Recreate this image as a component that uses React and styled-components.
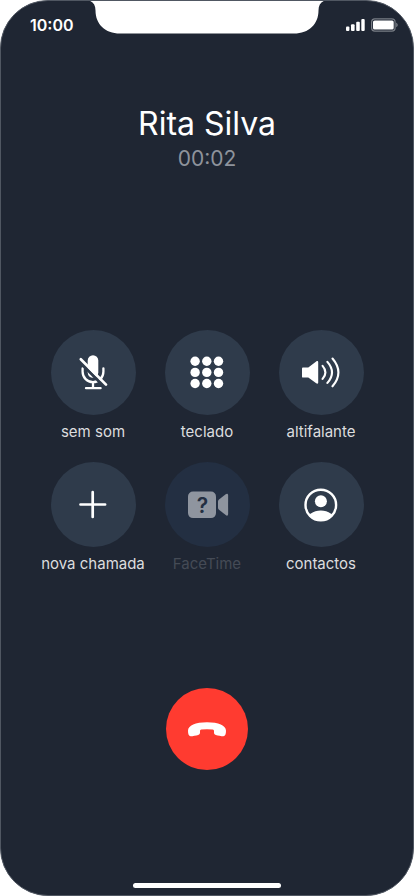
import React, { useState } from 'react'
import styled, { createGlobalStyle } from 'styled-components'

const GlobalStyle = createGlobalStyle`
    * {
        box-sizing: border-box;
    }
    body {
        margin: 0;
        background-color: #fff;
        font-family: Inter, "Liberation Sans", sans-serif;
    }
`
const Screen = styled.div`
    position: relative;
    display: flex;
    flex-direction: column;
    align-items: center;
    min-height: 100vh;
    overflow: hidden;
    border: 1px solid #505762;
    border-radius: 48px;
    background-color: #1f2633;
    color: #fff;
`
const Notch = styled.svg`
    position: absolute;
    top: -1px;
    left: 50%;
    transform: translateX(-50%);
`
const StatusBar = styled.header`
    display: flex;
    justify-content: space-between;
    align-items: center;
    width: 100%;
    height: 48px;
    padding: 0 15px 0 29px;
`
const Clock = styled.time`
    font-size: 16px;
    font-weight: 600;
`
const StatusIcons = styled.div`
    display: flex;
    align-items: center;
    gap: 6px;
`
const Caller = styled.div`
    display: flex;
    flex-direction: column;
    align-items: center;
    padding-top: 54px;
`
const CallerName = styled.h1`
    margin: 0;
    font-size: 32px;
    font-weight: 400;
    line-height: 42px;
`
const Duration = styled.div`
    font-size: 21px;
    line-height: 28px;
    color: #8e939c;
`
const ActionGrid = styled.div`
    display: grid;
    grid-template-columns: repeat(3, 1fr);
    row-gap: 19px;
    width: 100%;
    max-width: 342px;
    margin: auto 0;
    padding-top: 44px;
`
const ActionButton = styled.button`
    display: flex;
    flex-direction: column;
    align-items: center;
    gap: 5px;
    padding: 0;
    border: none;
    background: none;
    color: #dcdddf;
    font-family: inherit;
    font-size: 15px;
    line-height: 23px;
    white-space: nowrap;

    &:disabled {
        color: #454b56;
    }
`
const Circle = styled.span`
    display: flex;
    align-items: center;
    justify-content: center;
    width: 85px;
    height: 85px;
    border-radius: 50%;
    background-color: ${(props) => (props.$dimmed ? '#232f42' : '#2f3b4b')};
    color: ${(props) => (props.$dimmed ? '#8f959f' : '#fff')};
`
const HangUpButton = styled.button`
    display: flex;
    align-items: center;
    justify-content: center;
    width: 82px;
    height: 82px;
    padding: 0;
    border: none;
    border-radius: 50%;
    background-color: #ff3b30;
    color: #fff;
`
const HomeIndicator = styled.div`
    width: 148px;
    height: 5px;
    margin: 113px 0 7px;
    border-radius: 3px;
    background-color: #fff;
`

const Icon = ({ children }) => (
    <svg width="48" height="48" viewBox="0 0 48 48" fill="none" aria-hidden="true">
        {children}
    </svg>
)

const MicOffIcon = () => (
    <Icon>
        <rect x="18.7" y="6.2" width="10.6" height="22.6" rx="5.3" fill="currentColor" />
        <path d="M13.6 19.5v3.3a10.4 10.4 0 0 0 20.8 0v-3.3M24 33.2v6M17 39.2h14.6" stroke="currentColor" strokeWidth="2.3" strokeLinecap="round" />
        <path d="M9.8 12l25.4 25.6" stroke="#2f3b4b" strokeWidth="3" />
        <path d="M11.8 10.2l25.2 25.4" stroke="currentColor" strokeWidth="2.7" strokeLinecap="round" />
    </Icon>
)

const KeypadIcon = () => (
    <Icon>
        {[12.3, 23.4, 34.5].map((y) =>
            [12.1, 23.8, 35.5].map((x) => (
                <circle key={`${x}-${y}`} cx={x} cy={y} r="4.7" fill="currentColor" />
            ))
        )}
    </Icon>
)

const SpeakerIcon = () => (
    <Icon>
        <path d="M6.2 18.5h5.1l7.9-6c1-.7 2-.5 2 .8v20.2c0 1.3-1 1.5-2 .8l-7.9-5.7H6.2c-.8 0-1.2-.4-1.2-1.2v-7.7c0-.8.4-1.2 1.2-1.2z" fill="currentColor" />
        <path d="M25.6 16.9q5.6 6.5 0 13M30.4 12.9q9.2 10.5 0 21M35.5 9.5q11.8 13.9 0 27.8" stroke="currentColor" strokeWidth="2.1" strokeLinecap="round" />
    </Icon>
)

const PlusIcon = () => (
    <Icon>
        <path d="M23.7 11.2v24.7M11.5 23.5h24.6" stroke="currentColor" strokeWidth="2.7" strokeLinecap="round" />
    </Icon>
)

const VideoIcon = () => (
    <Icon>
        <rect x="5" y="10.6" width="28" height="26.5" rx="5" fill="currentColor" />
        <path d="M35 20.8c0-1 .3-1.6 1-2.2l6.7-5.3c1.3-1 2.4-.5 2.4 1v18.8c0 1.6-1.1 2-2.4 1L36 28.8c-.7-.6-1-1.2-1-2.2z" fill="currentColor" />
        <text x="19.4" y="31.5" textAnchor="middle" fontSize="21" fontWeight="600" fill="#232f42">?</text>
    </Icon>
)

const ContactIcon = () => (
    <Icon>
        <clipPath id="face">
            <circle cx="23.8" cy="24" r="16" />
        </clipPath>
        <circle cx="23.8" cy="24" r="15.3" stroke="currentColor" strokeWidth="2.4" />
        <circle cx="23.9" cy="20.3" r="6" fill="currentColor" />
        <ellipse cx="23.8" cy="40" rx="14" ry="10.5" fill="currentColor" clipPath="url(#face)" />
    </Icon>
)

const HangUpIcon = () => (
    <Icon>
        <path d="M24 17.2c11.5 0 19 3 19 8.6 0 3-.8 5.5-2.6 5.5-2.3 0-5.4-.7-7.6-1.3-1.4-.4-1.8-1.2-1.8-2.4v-1.5c0-1.1-.4-1.5-1.4-1.6a46 46 0 0 0-11.2 0c-1 .1-1.4.5-1.4 1.6v1.5c0 1.2-.4 2-1.8 2.4-2.2.6-5.3 1.3-7.6 1.3C5.8 31.3 5 28.8 5 25.8c0-5.6 7.5-8.6 19-8.6z" fill="currentColor" />
    </Icon>
)

const actions = [
    { id: 'mute', label: 'sem som', icon: MicOffIcon },
    { id: 'keypad', label: 'teclado', icon: KeypadIcon },
    { id: 'speaker', label: 'altifalante', icon: SpeakerIcon },
    { id: 'add', label: 'nova chamada', icon: PlusIcon },
    { id: 'facetime', label: 'FaceTime', icon: VideoIcon, disabled: true },
    { id: 'contacts', label: 'contactos', icon: ContactIcon },
]

function App() {
    const [active, setActive] = useState('')

    const toggleAction = (id) => {
        setActive(active === id ? '' : id)
    }

    return (
        <>
            <GlobalStyle />
            <Screen>
                <Notch width="244" height="34" viewBox="0 0 244 34" aria-hidden="true">
                    <path d="M0 0c7 0 10.5 4 10.5 10.5C10.5 24 20 33.5 35 33.5h174c15 0 24.5-9.5 24.5-23C233.5 4 237 0 244 0z" fill="#fff" />
                </Notch>
                <StatusBar>
                    <Clock>10:00</Clock>
                    <StatusIcons>
                        <svg width="19" height="12" viewBox="0 0 19 12" fill="#fff" aria-hidden="true">
                            <rect x="0" y="7.5" width="3.4" height="4.5" rx="1" />
                            <rect x="5" y="5.3" width="3.6" height="6.7" rx="1" />
                            <rect x="10.2" y="2.7" width="3.6" height="9.3" rx="1" />
                            <rect x="15.3" y="0" width="3.4" height="12" rx="1" />
                        </svg>
                        <svg width="27" height="14" viewBox="0 0 27 14" aria-hidden="true">
                            <rect x="0.6" y="0.9" width="23.5" height="12.2" rx="3.3" fill="none" stroke="#787d85" strokeWidth="1.2" />
                            <rect x="2" y="2.4" width="20.7" height="9.2" rx="1.6" fill="#fff" />
                            <path d="M25.2 4.8c1 .4 1.5 1.2 1.5 2.2s-.5 1.8-1.5 2.2z" fill="#787d85" />
                        </svg>
                    </StatusIcons>
                </StatusBar>
                <Caller>
                    <CallerName>Rita Silva</CallerName>
                    <Duration>00:02</Duration>
                </Caller>
                <ActionGrid>
                    {actions.map(({ id, label, icon: ActionIcon, disabled }) => (
                        <ActionButton
                            key={id}
                            type="button"
                            disabled={disabled}
                            aria-pressed={active === id}
                            onClick={() => toggleAction(id)}
                        >
                            <Circle $dimmed={disabled}>
                                <ActionIcon />
                            </Circle>
                            {label}
                        </ActionButton>
                    ))}
                </ActionGrid>
                <HangUpButton type="button" aria-label="Desligar">
                    <HangUpIcon />
                </HangUpButton>
                <HomeIndicator />
            </Screen>
        </>
    )
}

export default App
